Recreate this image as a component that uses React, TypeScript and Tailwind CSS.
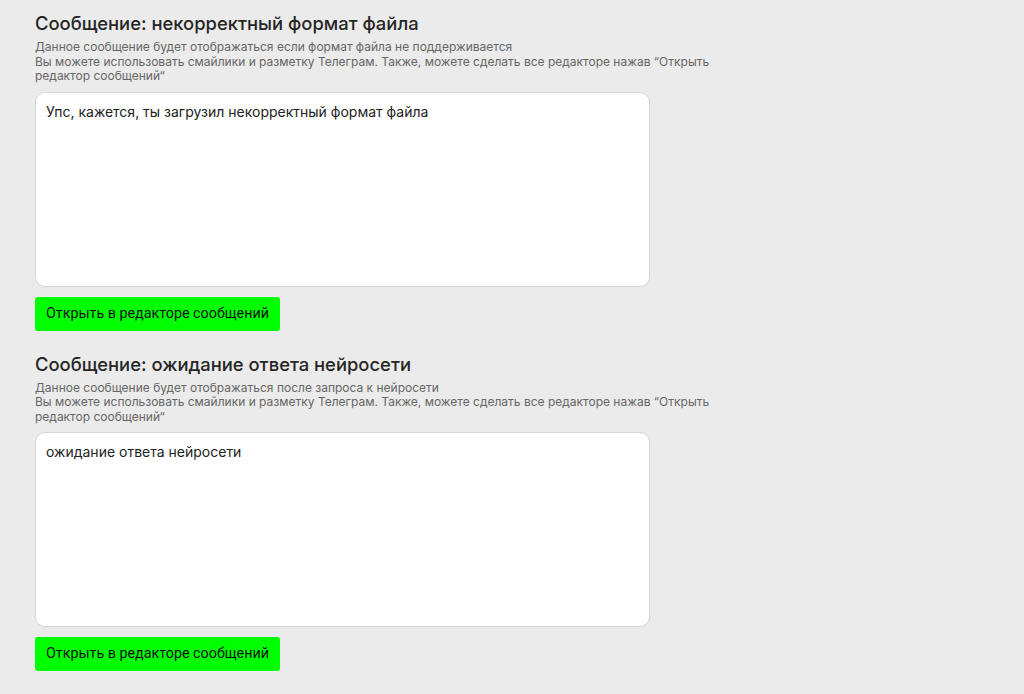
import React from 'react';

const sections = [
  {
    title: 'Сообщение: некорректный формат файла',
    hint: 'Данное сообщение будет отображаться если формат файла не поддерживается',
    value: 'Упс, кажется, ты загрузил некорректный формат файла',
  },
  {
    title: 'Сообщение: ожидание ответа нейросети',
    hint: 'Данное сообщение будет отображаться после запроса к нейросети',
    value: 'ожидание ответа нейросети',
  },
];

const App = () => {
  return (
    <div className="min-h-[694px] bg-[#ebebeb] px-[35px] pt-[11px] font-['Inter',sans-serif]">
      {sections.map((s, i) => (
        <div key={i} className="mb-[21px]">
          <h2 className="text-[18.4px] leading-[25px] font-medium text-[#262626]">{s.title}</h2>
          <div className="mt-[4px] w-[692px] text-[12px] leading-[14.5px] text-[#666]">
            <p>{s.hint}</p>
            <p>
              Вы можете использовать смайлики и разметку Телеграм. Также, можете сделать все редакторе нажав “Открыть
              редактор сообщений“
            </p>
          </div>
          <textarea
            defaultValue={s.value}
            className="mt-[8px] block h-[195px] w-[615px] resize-none rounded-[10px] border border-[#d6d6d6] bg-white px-[10px] pt-[9px] pb-[10px] text-[14px] leading-[20px] text-[#222] outline-none"
          />
          <button className="mt-[10px] h-[34px] rounded-[3px] bg-[#00ff00] px-[11px] font-['Roboto',sans-serif] text-[14.3px] text-[#111]">
            Открыть в редакторе сообщений
          </button>
        </div>
      ))}
    </div>
  );
};

export default App;
